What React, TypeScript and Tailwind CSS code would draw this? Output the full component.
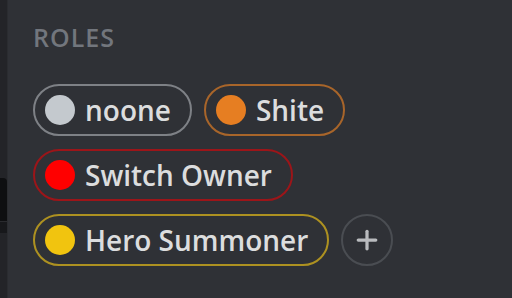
import { Plus } from "lucide-react";

const roles = [
  [
    { name: "noone", dot: "bg-[#c4c9ce]", ring: "border-[#7e8186]" },
    { name: "Shite", dot: "bg-[#e67e22]", ring: "border-[#a8652a]" },
  ],
  [{ name: "Switch Owner", dot: "bg-[#ff0000]", ring: "border-[#9c1519]" }],
  [{ name: "Hero Summoner", dot: "bg-[#f1c40f]", ring: "border-[#ad9121]" }],
];

const RolePill = ({ name, dot, ring }: { name: string; dot: string; ring: string }) => (
  <div className={`flex h-[52px] items-center gap-[10px] rounded-full border-2 pl-[10px] pr-[19px] ${ring}`}>
    <span className={`h-[30px] w-[30px] shrink-0 rounded-full ${dot}`} />
    <span className="text-[28px] font-semibold leading-none text-[#dcddde]">{name}</span>
  </div>
);

const App = () => {
  return (
    <div
      className="flex h-[298px] w-[512px] overflow-hidden bg-[#2f3136]"
      style={{ fontFamily: '"Open Sans", "Noto Sans", sans-serif' }}
    >
      <div className="flex w-[7px] flex-col bg-[#232428]">
        <div className="h-[178px]" />
        <div className="h-[43px] rounded-tr-[4px] bg-[#0e0f11]" />
        <div className="h-[12px] border-t border-[#2a2b2f] bg-[#17181b]" />
        <div className="flex-1" />
      </div>
      <div className="w-px bg-[#2a2c30]" />
      <div className="flex flex-col pl-[25px] pt-[25px]">
        <h3 className="text-[25px] font-semibold uppercase leading-none tracking-[0.04em] text-[#72767d]">
          Roles
        </h3>
        <div className="mt-[34px] flex flex-col gap-[13px]">
          {roles.map((row, i) => (
            <div key={i} className="flex gap-[12px]">
              {row.map((r) => (
                <RolePill key={r.name} {...r} />
              ))}
              {i === roles.length - 1 && (
                <button className="flex h-[52px] w-[52px] items-center justify-center rounded-full border-2 border-[#4a4d52] text-[#b9bbbe]">
                  <Plus size={30} strokeWidth={2.6} />
                </button>
              )}
            </div>
          ))}
        </div>
      </div>
    </div>
  );
};

export default App;
